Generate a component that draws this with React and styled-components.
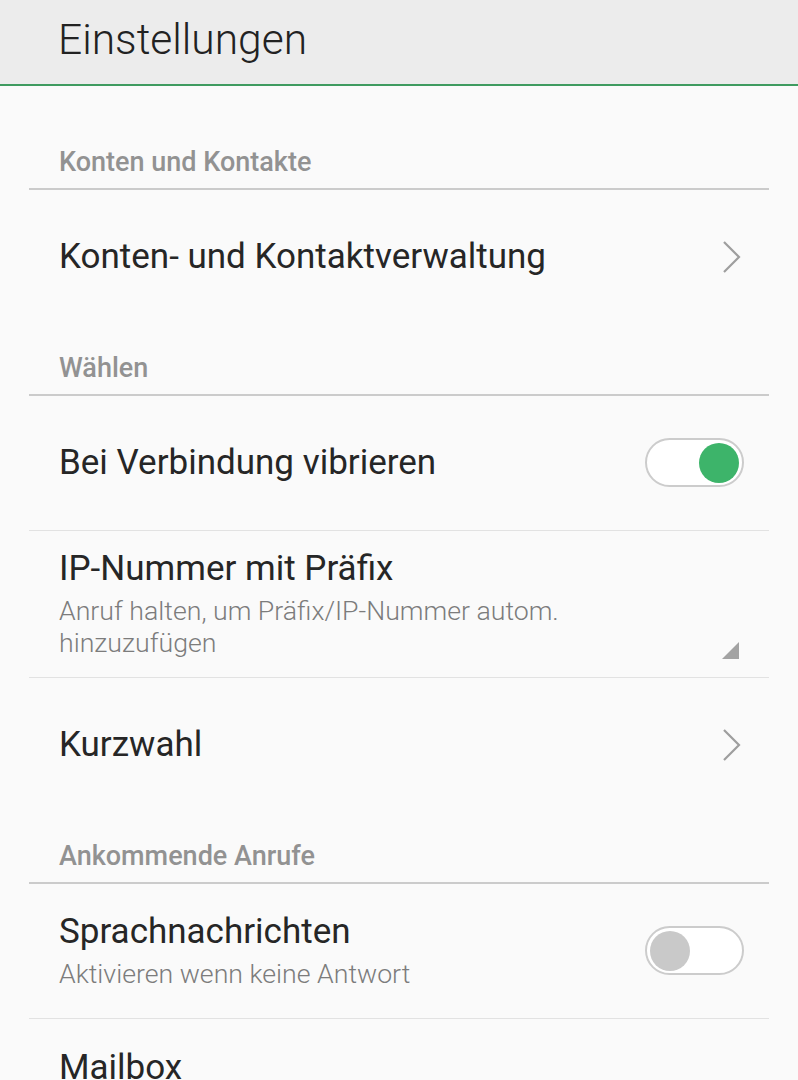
import styled, { createGlobalStyle } from "styled-components";

const GlobalStyle = createGlobalStyle`
  body {
    margin: 0;
    background: #fafafa;
    font-family: Roboto, "Noto Sans", sans-serif;
  }
`;

const sections = [
  {
    title: "Konten und Kontakte",
    first: true,
    items: [{ label: "Konten- und Kontaktverwaltung", type: "link" }],
  },
  {
    title: "Wählen",
    items: [
      { label: "Bei Verbindung vibrieren", type: "toggle", on: true },
      {
        label: "IP-Nummer mit Präfix",
        sub: "Anruf halten, um Präfix/IP-Nummer autom. hinzuzufügen",
        type: "menu",
      },
      { label: "Kurzwahl", type: "link" },
    ],
  },
  {
    title: "Ankommende Anrufe",
    items: [
      {
        label: "Sprachnachrichten",
        sub: "Aktivieren wenn keine Antwort",
        type: "toggle",
        on: false,
      },
      { label: "Mailbox", sub: "", type: "none" },
    ],
  },
];

export default function App() {
  return (
    <Page>
      <GlobalStyle />
      <Header>
        <HeaderTitle>Einstellungen</HeaderTitle>
      </Header>
      {sections.map((section) => (
        <Section key={section.title}>
          <SectionTitle $first={section.first}>{section.title}</SectionTitle>
          {section.items.map((item) => (
            <Row key={item.label}>
              <RowText>
                <Label>{item.label}</Label>
                {item.sub !== undefined && <Sub>{item.sub || "\u00a0"}</Sub>}
              </RowText>
              {item.type === "link" && (
                <svg width="20" height="34" viewBox="0 0 20 34">
                  <path d="M3 2 L18 17 L3 32" fill="none" stroke="#9e9e9e" strokeWidth="2.2" />
                </svg>
              )}
              {item.type === "toggle" && (
                <Switch $on={item.on}>
                  <Knob $on={item.on} />
                </Switch>
              )}
              {item.type === "menu" && (
                <Corner>
                  <svg width="17" height="17" viewBox="0 0 17 17">
                    <path d="M17 0 L17 17 L0 17 Z" fill="#a3a3a3" />
                  </svg>
                </Corner>
              )}
            </Row>
          ))}
        </Section>
      ))}
    </Page>
  );
}

const Page = styled.div`
  min-height: 1080px;
  background: #fafafa;
  overflow: hidden;
`;

const Header = styled.div`
  height: 84px;
  background: #ececec;
  border-bottom: 2px solid #3f9b60;
  display: flex;
  align-items: center;
  padding-left: 58px;
  box-sizing: content-box;
`;

const HeaderTitle = styled.h1`
  margin: 0 0 6px;
  font-size: 42.5px;
  font-weight: 300;
  color: #222;
`;

const Section = styled.div`
  margin: 0 29px;
`;

const SectionTitle = styled.div`
  height: ${(p) => (p.$first ? "104px" : "71px")};
  display: flex;
  align-items: flex-end;
  padding: 0 0 10px 30px;
  box-sizing: border-box;
  font-size: 27px;
  line-height: 32px;
  font-weight: 500;
  color: #929292;
  border-bottom: 2px solid #cbcbcb;
`;

const Row = styled.div`
  min-height: 135px;
  display: flex;
  align-items: center;
  justify-content: space-between;
  padding: 17px 28px 18px 30px;
  box-sizing: border-box;
  border-bottom: 1px solid #e2e2e2;
  position: relative;

  &:last-child {
    border-bottom: none;
  }
`;

const RowText = styled.div`
  display: flex;
  flex-direction: column;
  max-width: 560px;
`;

const Label = styled.div`
  font-size: 35px;
  font-weight: 400;
  color: #262626;
  line-height: 42px;
`;

const Sub = styled.div`
  font-size: 26.7px;
  font-weight: 300;
  color: #7c7c7c;
  line-height: 32px;
  margin-top: 5px;
`;

const Switch = styled.div`
  width: 99px;
  height: 49px;
  box-sizing: border-box;
  border: 2px solid #cccccc;
  border-radius: 25px;
  background: #fff;
  display: flex;
  align-items: center;
  justify-content: ${(p) => (p.$on ? "flex-end" : "flex-start")};
  padding: 0 3px;
  margin-right: -3px;
`;

const Knob = styled.div`
  width: 40px;
  height: 40px;
  border-radius: 50%;
  background: ${(p) => (p.$on ? "#3db46a" : "#c9c9c9")};
`;

const Corner = styled.div`
  position: absolute;
  right: 30px;
  bottom: 18px;
  display: flex;
`;
